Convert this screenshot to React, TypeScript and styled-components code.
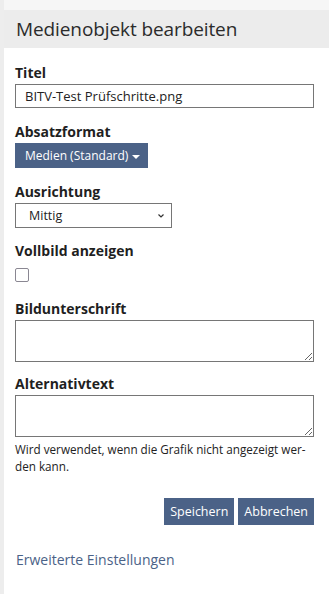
import styled, { createGlobalStyle } from "styled-components";

const GlobalStyle = createGlobalStyle`
  html, body {
    margin: 0;
    padding: 0;
    background: #ffffff;
  }
  body {
    font-family: "Open Sans", "Liberation Sans", sans-serif;
    color: #222222;
  }
`;

const Page = styled.div`
  min-height: 594px;
  box-sizing: border-box;
  border-left: 4px solid #ededed;
  padding-top: 10px;
  background: linear-gradient(#f6f6f6, #f6f6f6) top / 100% 10px no-repeat, #ffffff;
`;

const Header = styled.h1`
  margin: 0;
  height: 38px;
  display: flex;
  align-items: center;
  padding: 0 12px;
  background: #ececec;
  font-size: 19px;
  font-weight: 400;
  color: #2b2b2b;
  letter-spacing: -0.1px;
`;

const Form = styled.form`
  display: flex;
  flex-direction: column;
  padding: 16px 15px 0 11px;
`;

const Field = styled.div<{ $gap?: number }>`
  display: flex;
  flex-direction: column;
  align-items: flex-start;
  margin-bottom: ${({ $gap }) => $gap ?? 15}px;
`;

const Label = styled.label`
  font-size: 14px;
  font-weight: 700;
  line-height: 18px;
  color: #1f1f1f;
  margin-bottom: 2px;
`;

const TextInput = styled.input`
  box-sizing: border-box;
  width: 100%;
  height: 24px;
  border: 1px solid #767676;
  padding: 0 9px;
  font-family: inherit;
  font-size: 13px;
  color: #222;
  outline: none;
`;

const DropButton = styled.button`
  all: unset;
  box-sizing: border-box;
  display: flex;
  align-items: center;
  gap: 4px;
  height: 25px;
  padding: 0 8px 0 10px;
  background: #4b6287;
  color: #ffffff;
  font-family: "Open Sans", "Liberation Sans", sans-serif;
  font-size: 12px;
`;

const Caret = styled.span`
  width: 0;
  height: 0;
  border-left: 4px solid transparent;
  border-right: 4px solid transparent;
  border-top: 4px solid #ffffff;
  margin-top: 2px;
`;

const SelectBox = styled.div`
  box-sizing: border-box;
  width: 157px;
  height: 25px;
  border: 1px solid #767676;
  display: flex;
  align-items: center;
  justify-content: space-between;
  padding: 0 6px 0 13px;
  font-size: 12.5px;
  color: #222;
`;

const Checkbox = styled.span`
  box-sizing: border-box;
  width: 14px;
  height: 14px;
  border: 1.5px solid #8a8792;
  border-radius: 2px;
  margin-top: 6px;
`;

const TextArea = styled.textarea`
  box-sizing: border-box;
  width: 100%;
  height: 42px;
  border: 1px solid #767676;
  font-family: inherit;
  font-size: 13px;
  resize: vertical;
  outline: none;
  display: block;
`;

const Help = styled.p`
  margin: 4px 0 0;
  font-size: 11.7px;
  line-height: 17px;
  color: #222;
`;

const Actions = styled.div`
  display: flex;
  justify-content: flex-end;
  gap: 4px;
  margin-top: 23px;
`;

const ActionButton = styled.button`
  all: unset;
  box-sizing: border-box;
  height: 27px;
  padding: 0 6px;
  display: flex;
  align-items: center;
  background: #4b6287;
  color: #ffffff;
  font-family: "Open Sans", "Liberation Sans", sans-serif;
  font-size: 12.5px;
`;

const MoreLink = styled.a`
  margin-top: 25px;
  padding-left: 1px;
  font-size: 14px;
  line-height: 19px;
  color: #4b6287;
  text-decoration: none;
`;

const Chevron = () => (
  <svg width="8" height="6" viewBox="0 0 8 6" fill="none">
    <path d="M1.5 1.5L4 4L6.5 1.5" stroke="#333" strokeWidth="1.2" />
  </svg>
);

export default function App() {
  return (
    <Page>
      <GlobalStyle />
      <Header>Medienobjekt bearbeiten</Header>
      <Form onSubmit={(e) => e.preventDefault()}>
        <Field $gap={15}>
          <Label>Titel</Label>
          <TextInput defaultValue="BITV-Test Prüfschritte.png" />
        </Field>
        <Field $gap={15}>
          <Label>Absatzformat</Label>
          <DropButton type="button">
            Medien (Standard) <Caret />
          </DropButton>
        </Field>
        <Field $gap={14}>
          <Label>Ausrichtung</Label>
          <SelectBox>
            <span>Mittig</span>
            <Chevron />
          </SelectBox>
        </Field>
        <Field $gap={18}>
          <Label>Vollbild anzeigen</Label>
          <Checkbox />
        </Field>
        <Field $gap={13}>
          <Label>Bildunterschrift</Label>
          <TextArea />
        </Field>
        <Field $gap={0}>
          <Label>Alternativtext</Label>
          <TextArea />
          <Help>
            Wird verwendet, wenn die Grafik nicht angezeigt wer-
            <br />
            den kann.
          </Help>
        </Field>
        <Actions>
          <ActionButton type="button">Speichern</ActionButton>
          <ActionButton type="button">Abbrechen</ActionButton>
        </Actions>
        <MoreLink href="#">Erweiterte Einstellungen</MoreLink>
      </Form>
    </Page>
  );
}
